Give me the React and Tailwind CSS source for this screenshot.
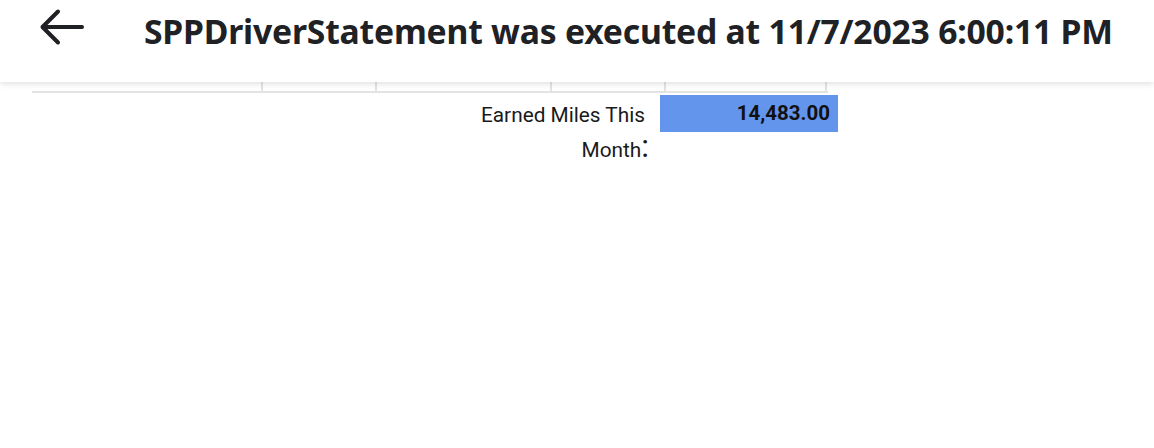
const cols = [231, 114, 175, 114, 161];

const App = () => {
  return (
    <div className="w-[1154px] h-[448px] bg-white overflow-hidden" style={{ fontFamily: "Roboto, sans-serif" }}>
      {/* Cabecera */}
      <header className="relative z-10 h-[82px] bg-white flex items-start shadow-[0_2px_6px_rgba(0,0,0,0.12)]">
        <div className="w-[144px] pl-[39px] pt-[8px]">
          <svg width="46" height="38" viewBox="0 0 46 38" fill="none" stroke="#202124" strokeWidth="4" strokeLinecap="round" strokeLinejoin="round">
            <path d="M43 19H4" />
            <path d="M19 3.5L3.5 19L19 34.5" />
          </svg>
        </div>
        <h1
          className="text-[33.7px] leading-[62px] font-bold text-[#202124] tracking-[-0.2px] whitespace-nowrap"
          style={{ fontFamily: "'Noto Sans', 'Open Sans', sans-serif" }}
        >
          SPPDriverStatement was executed at 11/7/2023 6:00:11 PM
        </h1>
      </header>

      {/* Tabla */}
      <div className="ml-[32px]">
        <div className="flex h-[11px] border-b-2 border-[#e3e3e3] w-[796px]">
          {cols.map((w, i) => (
            <div key={i} className="h-full border-r-2 border-[#e3e3e3]" style={{ width: w }} />
          ))}
        </div>
        <div className="flex mt-[2px]">
          <div className="w-[628px] pr-[15px] pt-[3px] text-right text-[20.8px] leading-[35px] text-[#1a1a1a]">
            Earned Miles This
            <br />
            Month<span className="text-[32px] leading-[0] -mr-[4px]">:</span>
          </div>
          <div className="w-[178px] h-[37px] bg-[#6495ed] flex items-center justify-end pr-[8px] text-[20.5px] font-bold text-[#111]">
            14,483.00
          </div>
        </div>
      </div>
    </div>
  );
};

export default App;
